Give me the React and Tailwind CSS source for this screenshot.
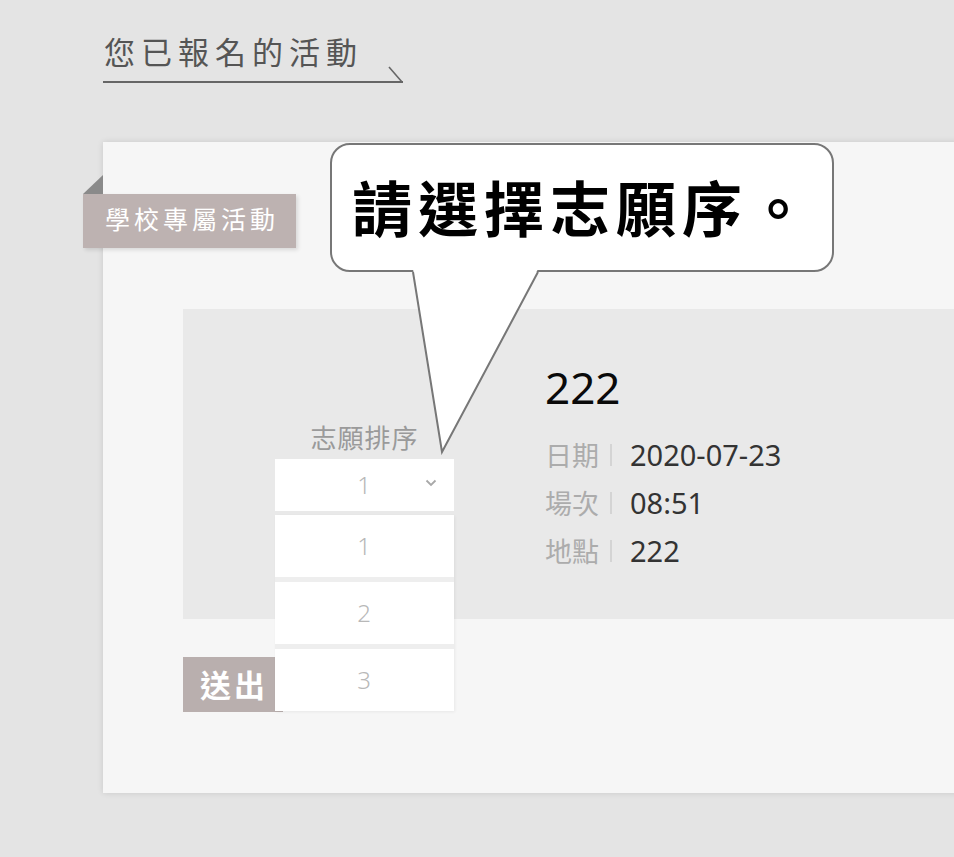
import React from "react";

const SANS = '"Noto Sans", "Noto Sans CJK TC", sans-serif';
const CJK = '"Noto Sans CJK TC", "Noto Sans", sans-serif';

export default function App() {
  return (
    <div
      className="w-[954px] h-[857px] overflow-hidden bg-[#e4e4e4]"
      style={{ fontFamily: SANS }}
    >
      {/* Title */}
      <div className="pl-[103px] pt-[30px]">
        <div className="relative w-[300px] border-b-2 border-[#666] pb-[9px]">
          <div
            className="text-[31px] leading-[42px] tracking-[6px] text-[#555] pl-[1px]"
            style={{ fontFamily: CJK }}
          >
            您已報名的活動
          </div>
          <svg
            className="absolute right-0 bottom-[-2px]"
            width="16"
            height="17"
            viewBox="0 0 16 17"
          >
            <line x1="2" y1="1" x2="15" y2="16" stroke="#666" strokeWidth="1.6" />
          </svg>
        </div>
      </div>

      {/* Card */}
      <div className="relative ml-[103px] mt-[59px] w-[900px] bg-[#f6f6f6] shadow-[0_0_6px_rgba(0,0,0,0.12)] pt-[167px] pl-[80px] pb-[81px]">
        {/* Tag */}
        <div className="absolute left-[-20px] top-[33px]">
          <svg width="20" height="19" viewBox="0 0 20 19" className="block">
            <polygon points="20,0 20,19 0,19" fill="#8a8a8a" />
          </svg>
          <div
            className="w-[213px] h-[54px] bg-[#bdb2b1] pl-[22px] flex items-center pb-[4px] text-white text-[25px] tracking-[4px] shadow-[2px_2px_4px_rgba(0,0,0,0.12)]"
            style={{ fontFamily: CJK }}
          >
            學校專屬活動
          </div>
        </div>

        {/* Gray box */}
        <div className="h-[310px] bg-[#e9e9e9] flex">
          <div className="w-[362px] flex flex-col items-center pt-[111px]">
            <div
              className="text-[26px] leading-[34px] tracking-[1px] text-[#9a9a9a] pl-[1px]"
              style={{ fontFamily: CJK }}
            >
              志願排序
            </div>
            <div className="relative mt-[5px] w-[179px] h-[52px] bg-white flex items-center justify-center z-20">
              <span className="text-[24px] font-light text-[#b8b8b8]">1</span>
              <svg
                className="absolute right-[17px] top-[20px]"
                width="12"
                height="8"
                viewBox="0 0 12 8"
              >
                <polyline
                  points="1.5,1.5 6,6 10.5,1.5"
                  fill="none"
                  stroke="#a8a8a8"
                  strokeWidth="1.8"
                />
              </svg>
              <div className="absolute left-0 top-full mt-[4px] w-[179px] flex flex-col gap-[5px] bg-[#eeeeee] shadow-[1px_1px_3px_rgba(0,0,0,0.06)]">
                {["1", "2", "3"].map((n) => (
                  <div
                    key={n}
                    className="h-[62px] bg-white flex items-center justify-center text-[24px] font-light text-[#b8b8b8]"
                  >
                    {n}
                  </div>
                ))}
              </div>
            </div>
          </div>

          <div className="pt-[56px]">
            <div className="text-[44px] leading-[44px] text-[#0a0a0a]">222</div>
            <div className="mt-[22px] flex flex-col">
              {[
                ["日期", "2020-07-23"],
                ["場次", "08:51"],
                ["地點", "222"],
              ].map(([k, v]) => (
                <div key={k} className="h-[48px] flex items-center text-[29px] leading-[48px]">
                  <span className="text-[#acacac] text-[27px]" style={{ fontFamily: CJK }}>
                    {k}
                  </span>
                  <span className="ml-[11px] mr-[18px] w-[2px] h-[22px] bg-[#d4d4d4]" />
                  <span className="text-[#333]">{v}</span>
                </div>
              ))}
            </div>
          </div>
        </div>

        {/* Submit */}
        <div
          className="mt-[38px] w-[100px] h-[55px] bg-[#b9afae] flex items-center justify-center pl-[2px] text-white text-[31px] font-bold tracking-[3px]"
          style={{ fontFamily: CJK }}
        >
          送出
        </div>

        {/* Callout bubble */}
        <div className="absolute left-[227px] top-[1px] z-30">
          <div
            className="w-[504px] h-[129px] rounded-[20px] border-2 border-[#777] bg-white flex items-center pl-[20px] pb-[4px] text-[60px] font-bold tracking-[6px] text-black"
            style={{ fontFamily: CJK }}
          >
            請選擇志願序。
          </div>
          <svg
            className="absolute left-[80px] top-[126px]"
            width="132"
            height="186"
            viewBox="0 0 132 186"
          >
            <polygon points="3,0 32,183 128,0" fill="#fff" />
            <polyline
              points="3,3 32,183 128,3"
              fill="none"
              stroke="#777"
              strokeWidth="2"
              strokeLinejoin="miter"
            />
          </svg>
        </div>
      </div>
    </div>
  );
}
